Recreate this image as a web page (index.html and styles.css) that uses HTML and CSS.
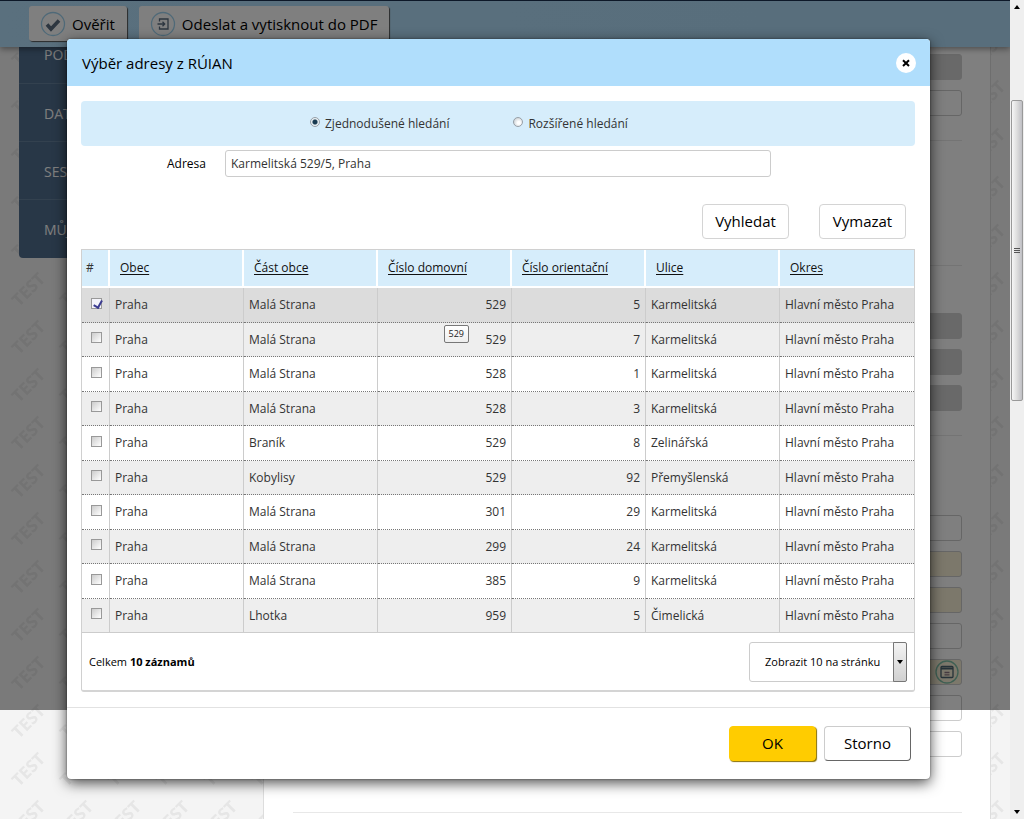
FILE: index.html
```html
<!DOCTYPE html>
<html lang="cs">
<head>
<meta charset="utf-8">
<title>Výběr adresy z RÚIAN</title>
<link rel="stylesheet" href="styles.css">
</head>
<body>
<div class="view">
  <svg class="watermark" aria-hidden="true">
    <defs>
      <pattern id="test" width="48" height="48" patternUnits="userSpaceOnUse" x="4" y="25">
        <text x="24" y="24" text-anchor="middle" dominant-baseline="central" transform="rotate(-45 24 24)">TEST</text>
      </pattern>
    </defs>
    <rect width="100%" height="100%" fill="url(#test)"/>
  </svg>
  <header class="topbar">
    <button class="tool" type="button">
      <svg class="tool-icon" viewBox="0 0 26 26"><circle cx="13" cy="13" r="11.5" fill="none" stroke="#9fd3f0" stroke-width="1.3"/><path d="M7 13.5l4 4.500 8-8.500" fill="none" stroke="#5b6c80" stroke-width="3.600"/></svg>
      Ověřit
    </button>
    <button class="tool" type="button">
      <svg class="tool-icon" viewBox="0 0 26 26"><circle cx="13" cy="13" r="11.500" fill="none" stroke="#9fd3f0" stroke-width="1.3"/><path d="M9.500 10.500v-2.500h8.500v10h-8.500v-2.500M7.500 13h7M12.500 10.800l2.200 2.200-2.200 2.200" fill="none" stroke="#5b6c80" stroke-width="1.300"/></svg>
      Odeslat a vytisknout do PDF
    </button>
  </header>
  <div class="page">
    <nav class="sidebar">
      <a href="#pod">POD</a>
      <a href="#dat">DAT</a>
      <a href="#sest">SEST</a>
      <a href="#muj">MŮJ</a>
    </nav>
    <main class="panel">
      <div class="group">
        <input class="field" aria-label="Pole 1" disabled>
        <input class="field" aria-label="Pole 2">
      </div>
      <div class="group empty"></div>
      <div class="group mid">
        <input class="field" aria-label="Pole 3" disabled>
        <input class="field" aria-label="Pole 4" disabled>
        <input class="field" aria-label="Pole 5" disabled>
      </div>
      <div class="group last">
        <input class="field" aria-label="Pole 6">
        <input class="field required" aria-label="Pole 7">
        <input class="field required" aria-label="Pole 8">
        <input class="field" aria-label="Pole 9">
        <div class="date">
          <input class="field required" aria-label="Datum">
          <button class="calendar" type="button" aria-label="Kalendář"><svg viewBox="0 0 24 24"><circle cx="12" cy="12" r="11" fill="none" stroke="#7fc0a8" stroke-width="1.300"/><rect x="6" y="6.500" width="12" height="11" rx="1" fill="none" stroke="#4c6470" stroke-width="1.300"/><path d="M6 8.500h12" stroke="#4c6470" stroke-width="2"/><path d="M9.500 12.500h5M9.500 14.800h5" stroke="#8a7480" stroke-width="1.300"/></svg></button>
        </div>
        <input class="field" aria-label="Pole 10">
        <input class="field" aria-label="Pole 11">
      </div>
    </main>
  </div>
  <div class="shade"></div>
  <div class="layer">
    <section class="dialog" role="dialog" aria-labelledby="title">
      <header class="dialog-head">
        <h1 id="title">Výběr adresy z RÚIAN</h1>
        <button class="close" type="button" aria-label="Zavřít"><svg viewBox="0 0 20 20"><path d="M7 7.200l6 5.800M13 7.200l-6 5.800" stroke="#000" stroke-width="2"/></svg></button>
      </header>
      <div class="dialog-body">
        <div class="modes">
          <label><input type="radio" name="mode" checked>Zjednodušené hledání</label>
          <label><input type="radio" name="mode">Rozšířené hledání</label>
        </div>
        <div class="address">
          <label for="adresa">Adresa</label>
          <input id="adresa" type="text" value="Karmelitská 529/5, Praha">
        </div>
        <div class="actions">
          <button class="btn" type="button">Vyhledat</button>
          <button class="btn" type="button">Vymazat</button>
        </div>
        <div class="grid">
          <table>
            <thead><tr><th class="mark">#</th><th><a href="#obec">Obec</a></th><th><a href="#cast">Část obce</a></th><th><a href="#dom">Číslo domovní</a></th><th><a href="#ori">Číslo orientační</a></th><th><a href="#ulice">Ulice</a></th><th><a href="#okres">Okres</a></th></tr></thead>
            <tbody>
              <tr class="selected"><td><input type="checkbox" aria-label="Vybrat" checked></td><td>Praha</td><td>Malá Strana</td><td class="num">529</td><td class="num">5</td><td>Karmelitská</td><td>Hlavní město Praha</td></tr>
              <tr><td><input type="checkbox" aria-label="Vybrat"></td><td>Praha</td><td>Malá Strana</td><td class="num tipped">529<span class="tip" role="tooltip">529</span></td><td class="num">7</td><td>Karmelitská</td><td>Hlavní město Praha</td></tr>
              <tr><td><input type="checkbox" aria-label="Vybrat"></td><td>Praha</td><td>Malá Strana</td><td class="num">528</td><td class="num">1</td><td>Karmelitská</td><td>Hlavní město Praha</td></tr>
              <tr><td><input type="checkbox" aria-label="Vybrat"></td><td>Praha</td><td>Malá Strana</td><td class="num">528</td><td class="num">3</td><td>Karmelitská</td><td>Hlavní město Praha</td></tr>
              <tr><td><input type="checkbox" aria-label="Vybrat"></td><td>Praha</td><td>Braník</td><td class="num">529</td><td class="num">8</td><td>Zelinářská</td><td>Hlavní město Praha</td></tr>
              <tr><td><input type="checkbox" aria-label="Vybrat"></td><td>Praha</td><td>Kobylisy</td><td class="num">529</td><td class="num">92</td><td>Přemyšlenská</td><td>Hlavní město Praha</td></tr>
              <tr><td><input type="checkbox" aria-label="Vybrat"></td><td>Praha</td><td>Malá Strana</td><td class="num">301</td><td class="num">29</td><td>Karmelitská</td><td>Hlavní město Praha</td></tr>
              <tr><td><input type="checkbox" aria-label="Vybrat"></td><td>Praha</td><td>Malá Strana</td><td class="num">299</td><td class="num">24</td><td>Karmelitská</td><td>Hlavní město Praha</td></tr>
              <tr><td><input type="checkbox" aria-label="Vybrat"></td><td>Praha</td><td>Malá Strana</td><td class="num">385</td><td class="num">9</td><td>Karmelitská</td><td>Hlavní město Praha</td></tr>
              <tr><td><input type="checkbox" aria-label="Vybrat"></td><td>Praha</td><td>Lhotka</td><td class="num">959</td><td class="num">5</td><td>Čimelická</td><td>Hlavní město Praha</td></tr>
            </tbody>
          </table>
          <div class="pager">
            <p>Celkem <b>10 záznamů</b></p>
            <div class="select">
              <select aria-label="Počet na stránku"><option>Zobrazit 10 na stránku</option></select>
              <span class="drop"><svg viewBox="0 0 6 4"><path d="M0 0h6l-3 4z"/></svg></span>
            </div>
          </div>
        </div>
      </div>
      <footer class="dialog-foot">
        <button class="btn primary" type="button">OK</button>
        <button class="btn raised" type="button">Storno</button>
      </footer>
    </section>
  </div>
</div>
<div class="scroll" aria-hidden="true">
  <div class="before"><svg viewBox="0 0 6 4"><path d="M0 4h6l-3-4z"/></svg></div>
  <div class="thumb"><i></i><i></i><i></i></div>
  <div class="after"><svg viewBox="0 0 6 4"><path d="M0 0h6l-3 4z"/></svg></div>
</div>
</body>
</html>
```
FILE: styles.css
```css
* { box-sizing: border-box; }
body {
  margin: 0;
  height: 100vh;
  display: flex;
  overflow: hidden;
  font: 12px/18px "Trebuchet MS", "Open Sans", "Noto Sans", sans-serif;
  color: #333;
}
button, input, select { font: inherit; color: inherit; margin: 0; }

/* page behind the dialog */
.view { position: relative; flex: 1; background: #f4f4f4; overflow: hidden; }
.watermark { position: absolute; inset: 0; width: 100%; height: 100%; }
.watermark text { font: 700 17px "Open Sans", sans-serif; fill: #e6e6e6; }
.topbar {
  position: relative;
  z-index: 1;
  display: flex;
  gap: 12px;
  height: 47px;
  padding: 5px 29px;
  border-top: 1px solid #1a3050;
  background: linear-gradient(90deg, #b4e0fc, #b0dcf8);
  box-shadow: 0 2px 6px rgba(0, 0, 0, .4);
}
.tool {
  display: flex;
  align-items: center;
  gap: 6px;
  height: 35px;
  padding: 0 12px 0 11px;
  border: 0;
  border-radius: 3px;
  background: #fff;
  box-shadow: 1px 1px 1px #555;
  font-size: 15px;
  font-weight: 500;
  color: #000;
}
.tool-icon { width: 26px; height: 26px; }
.page { position: relative; display: flex; align-items: flex-start; gap: 14px; padding: 0 19px; }
.sidebar { width: 230px; margin-top: -24px; padding-top: 23px; background: #506e8e; border-radius: 0 0 4px 4px; overflow: hidden; }
.sidebar a {
  display: block;
  height: 58px;
  padding: 21px 25px 0;
  border-bottom: 1px solid #66829f;
  font-size: 14px;
  font-weight: 500;
  color: #fff;
  text-decoration: none;
}
.sidebar a:first-child { height: 38px; padding-top: 0; }
.sidebar a:last-child { border: 0; }
.panel { flex: 1; min-height: 780px; padding: 0 28px 0 29px; background: #fff; border: 1px solid #ddd; border-width: 0 1px; }
.group { display: flex; flex-direction: column; gap: 10px; padding: 7px 0 24px; border-bottom: 1px solid #e8e8e8; }
.group.empty { height: 125px; }
.group.mid { padding-top: 47px; }
.group.last { padding: 79px 0 55px; }
.field { width: 100%; height: 26px; border: 1px solid #ccc; border-radius: 3px; background: transparent; }
.field:disabled { background: #d2d2d2; border-color: #d2d2d2; }
.field.required { background: #f8f0d6; }
.date { position: relative; height: 26px; }
.calendar { position: absolute; right: 3px; top: 1px; width: 24px; height: 24px; padding: 0; border: 0; background: none; }
.calendar svg { display: block; }
.shade { position: absolute; z-index: 2; inset: 0 0 109px; background: rgba(0, 0, 0, .5); }

/* dialog */
.layer { position: absolute; z-index: 3; inset: 0; padding: 39px 80px 39px 67px; }
.dialog { background: #fff; border-radius: 4px; box-shadow: 0 4px 14px rgba(0, 0, 0, .7), 0 0 2px rgba(0, 0, 0, .5); }
.dialog-head {
  display: flex;
  align-items: center;
  justify-content: space-between;
  height: 47px;
  padding: 0 14px 0 15px;
  border-radius: 4px 4px 0 0;
  background: #b0defc;
}
h1 { margin: 0; font-size: 15px; font-weight: 500; color: #000; }
.close { width: 20px; height: 20px; padding: 0; border: 0; border-radius: 50%; background: #fff; }
.close svg { display: block; }
.dialog-body { padding: 15px 15px 15px 14px; }
.modes {
  display: flex;
  gap: 64px;
  height: 45px;
  align-items: center;
  padding-left: 229px;
  border-radius: 4px;
  background: #d6edfb;
}
.modes label { display: flex; align-items: center; gap: 5px; }
.modes input {
  appearance: none;
  width: 10px;
  height: 10px;
  margin-bottom: 3px;
  border: 1px solid #98a0a8;
  border-radius: 50%;
  background: radial-gradient(circle at 60% 60%, #fff 20%, #ccd2d6 80%);
}
.modes input:checked { background: radial-gradient(circle, #173a50 35%, #e8f0f4 55%); }
.address { display: flex; align-items: center; gap: 19px; margin: 4px 144px 0 0; }
.address label { width: 125px; text-align: right; color: #000; }
.address input { flex: 1; min-width: 0; height: 27px; padding: 0 5px; border: 1px solid #ccc; border-radius: 3px; background: #fff; }
.actions { display: flex; justify-content: flex-end; gap: 30px; margin: 27px 9px 10px; }
.btn {
  width: 87px;
  height: 35px;
  padding: 0 0 2px;
  border: 1px solid #d4d4d4;
  border-radius: 4px;
  background: #fff;
  font-size: 15px;
  font-weight: 500;
  color: #000;
}
.grid { border: 1px solid #d0d0d0; border-bottom: 2px solid #d4d4d4; border-radius: 0 0 3px 3px; }
table { width: 100%; table-layout: fixed; border-collapse: separate; border-spacing: 0; }
th {
  height: 38px;
  padding: 0 10px;
  border-right: 2px solid #fff;
  border-bottom: 2px solid #fff;
  background: #d6edfb;
  font-weight: 400;
  text-align: left;
}
th:last-child { border-right: 0; }
th.mark { width: 28px; padding: 0 4px; }
th a { color: #111; text-underline-offset: 2px; }
td { height: 34px; padding: 0 5px; border-right: 1px solid #ccc; border-bottom: 1px dotted #777; }
tr:nth-child(odd) td { height: 35px; }
tr:nth-child(even) td { background: #eee; }
tr.selected td { background: #dcdcdc; }
td:last-child { border-right: 0; }
tr:last-child td { border-bottom: 1px solid #ccc; }
td.num { text-align: right; }
td input {
  appearance: none;
  display: block;
  width: 11px;
  height: 11px;
  margin: 0 0 4px 4px;
  border: 1px solid #999;
  background: linear-gradient(135deg, #ccc, #fff);
}
td input:checked { background: #f4f4fa; }
td input:checked::after {
  content: "";
  display: block;
  width: 4px;
  height: 7px;
  margin: 0 0 0 3px;
  border: solid #3c3c90;
  border-width: 0 2px 2px 0;
  transform: rotate(30deg);
}
.tipped { position: relative; }
.tip {
  position: absolute;
  right: 42px;
  top: 2px;
  padding: 0 4px;
  border: 1px solid #777;
  border-radius: 2px;
  background: linear-gradient(#fff, #eee);
  font-size: 9px;
  line-height: 16px;
  color: #222;
}
.pager { display: flex; align-items: center; justify-content: space-between; height: 57px; padding: 0 7px; font-size: 11px; color: #000; }
.pager p { margin: 0; }
.select { position: relative; width: 158px; height: 40px; }
select { appearance: none; width: 100%; height: 100%; padding: 0 15px; border: 1px solid #ccc; border-radius: 3px; background: #fff; }
.drop {
  position: absolute;
  inset: 0 0 0 auto;
  width: 14px;
  display: grid;
  place-items: center;
  border: 1px solid #777;
  border-radius: 0 2px 2px 0;
  background: linear-gradient(#f4f4f4, #d0d0d0);
  pointer-events: none;
}
.drop svg, .scroll svg { display: block; width: 6px; height: 4px; }
.dialog-foot { display: flex; justify-content: flex-end; gap: 8px; padding: 18px 19px; border-top: 1px solid #e2e2e2; }
.primary { border-color: #fc0; background: #fc0; box-shadow: 1px 1px 1px #8a7000; }
.raised { border-color: #ccc #666 #666 #ccc; }

/* window scrollbar */
.scroll { width: 14px; display: flex; flex-direction: column; background: #efefef; padding: 0 1px; }
.before, .after { display: flex; flex-direction: column; align-items: center; padding: 5px 0; }
.before { flex: 90; }
.after { flex: 408; justify-content: flex-end; }
.thumb {
  flex: 299;
  display: flex;
  flex-direction: column;
  align-items: center;
  justify-content: center;
  gap: 1px;
  border: 1px solid #999;
  border-radius: 2px;
  background: linear-gradient(90deg, #f6f6f6, #ddd 50%, #bfbfc4);
}
.thumb i { width: 6px; height: 1px; background: #555; }
```
